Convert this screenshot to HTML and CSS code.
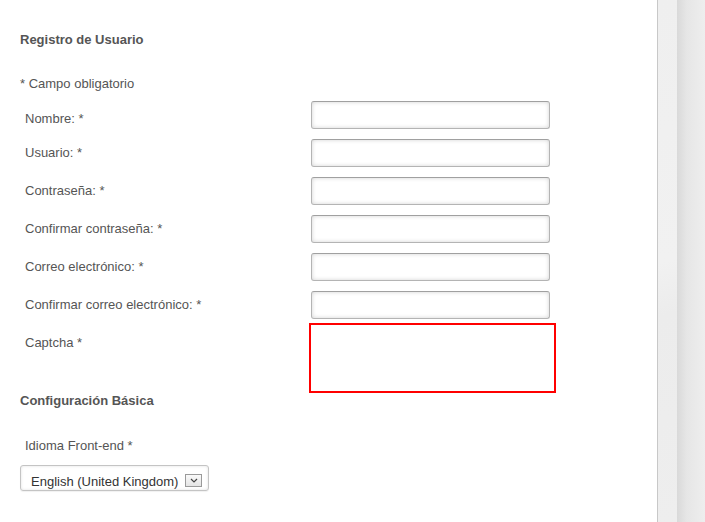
FILE: index.html
```html
<!DOCTYPE html>
<html lang="es">
<head>
<meta charset="utf-8">
<title>Registro de Usuario</title>
<link rel="stylesheet" href="styles.css">
</head>
<body>
<div class="page">
  <div class="main">
    <h2 class="legend">Registro de Usuario</h2>
    <p class="note">* Campo obligatorio</p>
    <div class="rows">
      <div class="row"><label class="lbl lbl-low">Nombre: *</label><span class="field"></span></div>
      <div class="row"><label class="lbl">Usuario: *</label><span class="field"></span></div>
      <div class="row"><label class="lbl">Contraseña: *</label><span class="field"></span></div>
      <div class="row"><label class="lbl">Confirmar contraseña: *</label><span class="field"></span></div>
      <div class="row"><label class="lbl">Correo electrónico: *</label><span class="field"></span></div>
      <div class="row row-last"><label class="lbl">Confirmar correo electrónico: *</label><span class="field"></span></div>
      <div class="row row-captcha"><label class="lbl lbl-captcha">Captcha *</label><span class="captcha"></span></div>
    </div>
    <h2 class="legend legend-2">Configuración Básica</h2>
    <p class="lang-label">Idioma Front-end *</p>
    <div class="select">
      <span class="select-text">English (United Kingdom)</span>
      <span class="select-btn"><svg width="8" height="5" viewBox="0 0 8 5"><path d="M1 1 L4 4 L7 1" fill="none" stroke="#444" stroke-width="1.2"/></svg></span>
    </div>
  </div>
  <div class="side">
    <div class="side-a"></div>
    <div class="side-b"></div>
  </div>
</div>
</body>
</html>
```
FILE: styles.css
```css
html, body {
  margin: 0;
  padding: 0;
  background: #fff;
}
body {
  font-family: "Liberation Sans", Arial, sans-serif;
  font-size: 13px;
  color: #555;
}
.page {
  display: flex;
  height: 522px;
  overflow: hidden;
}
.main {
  width: 657px;
  flex: none;
  padding: 33px 0 0 20px;
  box-sizing: border-box;
}
.legend {
  margin: 0;
  font-size: 13px;
  font-weight: bold;
  line-height: 14px;
  color: #555;
}
.note {
  margin: 30px 0 0;
  line-height: 14px;
}
.rows {
  margin-top: 10px;
}
.row {
  display: flex;
  height: 28px;
  margin-bottom: 10px;
}
.row-last {
  margin-bottom: 4px;
}
.row-captcha {
  height: 70px;
  margin-bottom: 0;
}
.lbl {
  width: 286px;
  flex: none;
  padding: 7px 0 0 5px;
  line-height: 14px;
}
.lbl-low {
  padding-top: 11px;
}
.lbl-captcha {
  padding-top: 13px;
}
.field {
  width: 239px;
  height: 28px;
  box-sizing: border-box;
  border: 1px solid #b4b4b4;
  border-top-color: #a0a0a0;
  border-radius: 3px;
  background: #fff;
  box-shadow: inset 0 0 4px rgba(0, 0, 0, 0.18);
}
.captcha {
  width: 247px;
  height: 70px;
  margin-left: -2px;
  box-sizing: border-box;
  border: 2px solid #f00;
}
.legend-2 {
  margin-top: 1px;
}
.lang-label {
  margin: 31px 0 0;
  padding-left: 5px;
  line-height: 14px;
}
.select {
  margin-top: 12px;
  width: 189px;
  height: 26px;
  box-sizing: border-box;
  border: 1px solid #c4c4c4;
  border-radius: 3px;
  box-shadow: inset 0 0 3px rgba(0, 0, 0, 0.12), 0 1px 1px rgba(0, 0, 0, 0.06);
  display: flex;
  align-items: flex-start;
  position: relative;
}
.select-text {
  display: block;
  margin: 8px 0 0 10px;
  line-height: 15px;
  font-size: 13px;
  color: #333;
  white-space: nowrap;
}
.select-btn {
  position: absolute;
  left: 164px;
  top: 8px;
  width: 17px;
  height: 13px;
  box-sizing: border-box;
  border: 1px solid #9a9a9a;
  background: linear-gradient(#fafafa, #e4e4e4);
  display: flex;
  align-items: center;
  justify-content: center;
}
.side {
  flex: 1;
  display: flex;
  border-left: 1px solid #c8c8c8;
}
.side-a {
  width: 19px;
  background: linear-gradient(165deg, #efefef 0%, #f1f1f1 50%, #ececec 60%, #eeeeee 100%);
}
.side-b {
  flex: 1;
  background: linear-gradient(90deg, #d9d9d9 0%, #e6e6e6 35%, #eeeeee 100%);
}
```
